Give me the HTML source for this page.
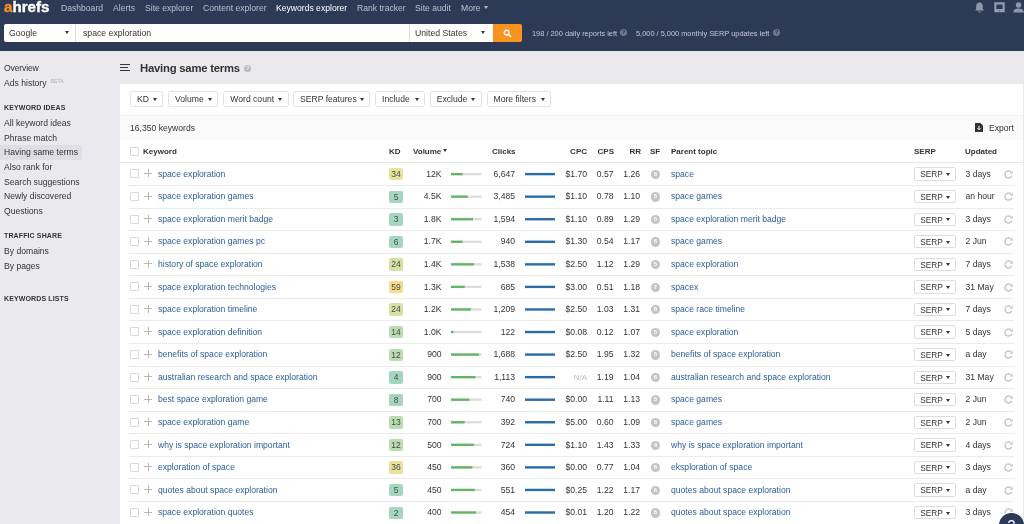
<!DOCTYPE html>
<html><head><meta charset="utf-8"><title>Keywords explorer</title>
<style>
*{box-sizing:border-box;margin:0;padding:0}
html{width:1024px;height:524px;overflow:hidden;background:#eaeaee}
body{width:1024px;height:524px;overflow:hidden;will-change:transform}
body{font-family:"Liberation Sans",sans-serif;font-size:8.6px;color:#333;position:relative}
.abs{position:absolute}
#top{position:absolute;left:0;top:0;width:1024px;height:51px;background:#2d3a55}
#logo{position:absolute;left:3.5px;top:-1.5px;font-weight:bold;font-size:14px;color:#fff;transform-origin:0 0;transform:scaleX(1.08);-webkit-text-stroke:.35px #fff}
#logo i{-webkit-text-stroke:.35px #f7931e}
#logo i{color:#f7931e;font-style:normal}
.nav{position:absolute;top:2.5px;font-size:8.6px;color:#b9c0cf;white-space:nowrap}
.nav.act{color:#fff}
#search{position:absolute;left:4px;top:23.7px;width:489px;height:18.8px;background:#fff;border-radius:2px 0 0 2px}
#search span{position:absolute;top:4.5px;font-size:8.7px;color:#333}
#search .sep{position:absolute;top:0;width:1px;height:100%;background:#ddd}
.caret{position:absolute;width:0;height:0;border-left:2.6px solid transparent;border-right:2.6px solid transparent;border-top:3.8px solid #333}
#go{position:absolute;left:492.5px;top:23.7px;width:29px;height:18.8px;background:#f7931e;border-radius:0 2px 2px 0}
.info{position:absolute;top:28.5px;font-size:7.4px;color:#c3c9d6;white-space:nowrap}
.q{position:absolute;width:7px;height:7px;border-radius:50%;background:#6d7890;color:#2d3a55;font-size:6px;font-weight:bold;text-align:center;line-height:7px}
#side a{position:absolute;left:4px;font-size:8.6px;color:#333;white-space:nowrap}
#side .h{position:absolute;left:4px;font-size:7px;font-weight:bold;color:#333;letter-spacing:.12px;white-space:nowrap}
#side .sel{position:absolute;left:0;top:145px;width:82px;height:15px;background:#dedee4;border-radius:0 2px 2px 0}
#title{position:absolute;left:140px;top:62px;font-size:11.3px;letter-spacing:-.22px;font-weight:bold;color:#333;white-space:nowrap}
#burger{position:absolute;left:120px;top:64.4px;width:10px;height:9px}
#burger i{position:absolute;left:0;height:1px;background:#3a3a3a}
#panel{position:absolute;left:120px;top:84.3px;width:902.5px;height:440px;background:#fff;overflow:hidden}
#sub{position:absolute;left:0;top:30.5px;width:904px;height:25px;background:#fafafa;border-top:1px solid #f1f1f1}
.fb{position:absolute;top:7.2px;height:15.6px;border:1px solid #e2e2e2;border-radius:2.5px;font-size:8.6px;color:#333;background:#fff;line-height:14.6px;padding-left:6px;white-space:nowrap}
.fb b{position:absolute;right:5.5px;top:5.3px;width:0;height:0;border-left:2.9px solid transparent;border-right:2.9px solid transparent;border-top:3.3px solid #333}
#cnt{position:absolute;left:10px;top:38.5px;font-size:8.6px;color:#333}
#exp{position:absolute;left:869px;top:38.5px;font-size:8.6px;color:#333}
#thead{position:absolute;left:0;top:55.7px;width:904px;height:22.8px;background:#fff;border-bottom:1px solid #e6e6e6}
#thead span{position:absolute;top:7px;font-size:8px;font-weight:bold;color:#333;white-space:nowrap}
.row{position:absolute;left:0;width:904px;height:22.56px}
.row:after{content:"";position:absolute;left:9px;right:10px;bottom:-1px;height:1px;background:#ebebeb}
.row>*{position:absolute;white-space:nowrap}
.cb{left:9.5px;top:7px;width:9px;height:9px;border:1px solid #d9d9d9;border-radius:1px;background:#fff}
.plus{left:24px;top:7px;width:8px;height:8px}
.plus:before{content:"";position:absolute;left:0;top:3.5px;width:8px;height:1px;background:#b8b8b8}
.plus:after{content:"";position:absolute;left:3.5px;top:0;width:1px;height:8px;background:#b8b8b8}
.kw,.pt{color:#2a5d9a;font-size:8.6px;top:6.3px}
.kw{left:38px}
.pt{left:551px}
.kd{left:269px;top:5.5px;width:14px;height:12.5px;font-size:8.5px;text-align:center;line-height:12.5px;color:#4a4a4a;border-radius:2px}
.vol{right:582.5px;top:6.3px;font-size:8.6px}
.vbar{left:331px;top:10.4px;width:30.5px;height:2.2px;background:#dcdcdc}
.vbar i{display:block;height:2.2px;background:#62b562}
.clicks{right:509px;top:6.3px;font-size:8.6px}
.cbar{left:405px;top:10.3px;width:30px;height:2.4px;background:#2b6ca3}
.cpc{right:437px;top:6.3px;font-size:8.6px}
.cpc.na{color:#bbb;font-size:8px;top:7px}
.cps{right:410.5px;top:6.3px;font-size:8.6px}
.rr{right:384px;top:6.3px;font-size:8.6px}
.sf{left:530.7px;top:7.2px;width:9.3px;height:9.3px;border-radius:50%;background:#c4c4c4;color:#fff;font-size:6px;font-weight:bold;text-align:center;line-height:9.3px}
.serp{left:794.3px;top:5px;width:41.4px;height:13.2px;border:1px solid #ddd;border-radius:2px;font-size:8.3px;line-height:12px;padding-left:5px;color:#333}
.serp b{position:absolute;right:5px;top:4.6px;width:0;height:0;border-left:2.3px solid transparent;border-right:2.3px solid transparent;border-top:3px solid #333}
.upd{left:845.5px;top:6.3px;font-size:8.6px}
.rf{left:883.4px;top:6.3px;width:11px;height:11px}
#help{position:absolute;left:999px;top:513px;width:24.6px;height:24.6px;border-radius:50%;background:#2d3a55;color:#fff;font-size:14px;text-align:center;line-height:25px;box-shadow:0 0 0 1px rgba(255,255,255,.8)}
</style></head><body>
<div id="top">
<div id="logo"><i>a</i>hrefs</div>
<span class="nav" style="left:61px">Dashboard</span>
<span class="nav" style="left:113px">Alerts</span>
<span class="nav" style="left:145px">Site explorer</span>
<span class="nav" style="left:203px">Content explorer</span>
<span class="nav act" style="left:276px">Keywords explorer</span>
<span class="nav" style="left:357px">Rank tracker</span>
<span class="nav" style="left:415px">Site audit</span>
<span class="nav" style="left:461px">More</span>
<i class="caret" style="left:484.3px;top:6.2px;border-top-color:#b9c0cf"></i>
<div id="search"><span style="left:5px">Google</span><i class="caret" style="left:60.6px;top:7.6px"></i><i class="sep" style="left:71px"></i><span style="left:79px">space exploration</span><i class="sep" style="left:405px"></i><span style="left:411px">United States</span><i class="caret" style="left:477px;top:7.6px"></i></div>
<div id="go"><svg style="position:absolute;left:10px;top:5px" width="9" height="9" viewBox="0 0 9 9"><circle cx="3.6" cy="3.6" r="2.4" fill="none" stroke="#fff" stroke-width="1.4"/><path d="M5.4 5.4L8 8" stroke="#fff" stroke-width="1.6"/></svg></div>
<span class="info" style="left:532px">198 / 200 daily reports left</span><span class="q" style="left:620px;top:29px">?</span>
<span class="info" style="left:636px">5,000 / 5,000 monthly SERP updates left</span><span class="q" style="left:773px;top:29px">?</span>
<svg class="abs" style="left:974px;top:1.6px" width="11" height="11" viewBox="0 0 11 11"><path d="M5.5 0.6C3.2 0.6 2.2 2.4 2.2 4.4V7L1 8.4h9L8.8 7V4.4C8.8 2.4 7.8 0.6 5.5 0.6zM4.3 9.2h2.4a1.2 1.2 0 0 1-2.4 0z" fill="#8e97ab"/></svg>
<svg class="abs" style="left:993.8px;top:1.6px" width="11" height="11" viewBox="0 0 11 11"><path d="M0.3 0.3h10.4v10h-10.4zM2.4 2.4v4.6h6.2V2.4zM4.6 8.6l.9.9.9-.9z" fill="#959db0" fill-rule="evenodd"/></svg>
<svg class="abs" style="left:1013px;top:1.6px" width="11" height="11" viewBox="0 0 11 11"><circle cx="5.5" cy="3" r="2.8" fill="#8e97ab"/><path d="M0.3 10.4c0-2.8 2-3.8 5.2-3.8s5.2 1 5.2 3.8z" fill="#8e97ab"/></svg>
</div>
<div id="side">
<div class="sel"></div>
<a style="top:63px;letter-spacing:-.15px">Overview</a>
<a style="top:77.5px">Ads history</a><a style="top:78.2px;left:50.5px;font-size:5.2px;color:#b0b0b5">BETA</a>
<span class="h" style="top:104px">KEYWORD IDEAS</span>
<a style="top:118px">All keyword ideas</a>
<a style="top:133px">Phrase match</a>
<a style="top:147px">Having same terms</a>
<a style="top:162px">Also rank for</a>
<a style="top:177px">Search suggestions</a>
<a style="top:191px">Newly discovered</a>
<a style="top:206px">Questions</a>
<span class="h" style="top:232px">TRAFFIC SHARE</span>
<a style="top:246px">By domains</a>
<a style="top:261px">By pages</a>
<span class="h" style="top:295px">KEYWORDS LISTS</span>
</div>
<div id="burger"><i style="top:0;width:10px"></i><i style="top:3px;width:8px"></i><i style="top:6px;width:10px"></i></div>
<div id="title">Having same terms</div><span class="q" style="left:244px;top:65px;background:#bbb;color:#e9e9ef">?</span>
<div id="panel">
<span class="fb" style="left:10px;width:33px">KD<b></b></span>
<span class="fb" style="left:48px;width:50px">Volume<b></b></span>
<span class="fb" style="left:103.3px;width:65.5px">Word count<b></b></span>
<span class="fb" style="left:173px;width:77px">SERP features<b></b></span>
<span class="fb" style="left:255px;width:50px">Include<b></b></span>
<span class="fb" style="left:309.7px;width:52.3px">Exclude<b></b></span>
<span class="fb" style="left:366.5px;width:64.5px">More filters<b></b></span>
<div id="sub"></div>
<span id="cnt">16,350 keywords</span>
<span id="exp">Export</span>
<svg class="abs" style="left:855px;top:39px" width="8" height="9" viewBox="0 0 8 9"><path d="M0 0h5.5L8 2.5V9H0z" fill="#333"/><path d="M4 3v3.5M2.5 5.2L4 6.8l1.5-1.6" stroke="#fff" stroke-width="1" fill="none"/></svg>
<div id="thead">
<span class="cb" style="top:7.5px;left:9.5px;position:absolute"></span>
<span style="left:23px">Keyword</span>
<span style="left:269px">KD</span>
<span style="left:293px">Volume</span><i class="caret" style="left:323px;top:9.5px"></i>
<span style="left:372px">Clicks</span>
<span style="right:437px">CPC</span>
<span style="right:410px">CPS</span>
<span style="right:383px">RR</span>
<span style="left:530px">SF</span>
<span style="left:551px">Parent topic</span>
<span style="left:794px">SERP</span>
<span style="left:845px">Updated</span>
</div>
<div id="rows" style="position:absolute;left:0;top:78.2px">
<div class="row" style="top:0.00px"><span class="cb"></span><span class="plus"></span><a class="kw">space exploration</a><span class="kd" style="background:#e8e39b">34</span><span class="vol">12K</span><span class="clicks">6,647</span><span class="cpc">$1.70</span><span class="cps">0.57</span><span class="rr">1.26</span><span class="sf">6</span><a class="pt">space</a><span class="serp">SERP<b></b></span><span class="upd">3 days</span><svg class="rf" viewBox="0 0 11 11"><path d="M8.79 6.7A3.5 3.5 0 1 1 7.97 3.03" fill="none" stroke="#c9c9c9" stroke-width="1.5"/><path d="M9.8 1.6V4.7H6.7z" fill="#c9c9c9"/></svg></div>
<div class="row" style="top:22.57px"><span class="cb"></span><span class="plus"></span><a class="kw">space exploration games</a><span class="kd" style="background:#a5d6c0">5</span><span class="vol">4.5K</span><span class="clicks">3,485</span><span class="cpc">$1.10</span><span class="cps">0.78</span><span class="rr">1.10</span><span class="sf">5</span><a class="pt">space games</a><span class="serp">SERP<b></b></span><span class="upd">an hour</span><svg class="rf" viewBox="0 0 11 11"><path d="M8.79 6.7A3.5 3.5 0 1 1 7.97 3.03" fill="none" stroke="#c9c9c9" stroke-width="1.5"/><path d="M9.8 1.6V4.7H6.7z" fill="#c9c9c9"/></svg></div>
<div class="row" style="top:45.14px"><span class="cb"></span><span class="plus"></span><a class="kw">space exploration merit badge</a><span class="kd" style="background:#a5d6c0">3</span><span class="vol">1.8K</span><span class="clicks">1,594</span><span class="cpc">$1.10</span><span class="cps">0.89</span><span class="rr">1.29</span><span class="sf">5</span><a class="pt">space exploration merit badge</a><span class="serp">SERP<b></b></span><span class="upd">3 days</span><svg class="rf" viewBox="0 0 11 11"><path d="M8.79 6.7A3.5 3.5 0 1 1 7.97 3.03" fill="none" stroke="#c9c9c9" stroke-width="1.5"/><path d="M9.8 1.6V4.7H6.7z" fill="#c9c9c9"/></svg></div>
<div class="row" style="top:67.71px"><span class="cb"></span><span class="plus"></span><a class="kw">space exploration games pc</a><span class="kd" style="background:#a5d6c0">6</span><span class="vol">1.7K</span><span class="clicks">940</span><span class="cpc">$1.30</span><span class="cps">0.54</span><span class="rr">1.17</span><span class="sf">6</span><a class="pt">space games</a><span class="serp">SERP<b></b></span><span class="upd">2 Jun</span><svg class="rf" viewBox="0 0 11 11"><path d="M8.79 6.7A3.5 3.5 0 1 1 7.97 3.03" fill="none" stroke="#c9c9c9" stroke-width="1.5"/><path d="M9.8 1.6V4.7H6.7z" fill="#c9c9c9"/></svg></div>
<div class="row" style="top:90.28px"><span class="cb"></span><span class="plus"></span><a class="kw">history of space exploration</a><span class="kd" style="background:#d3e3a5">24</span><span class="vol">1.4K</span><span class="clicks">1,538</span><span class="cpc">$2.50</span><span class="cps">1.12</span><span class="rr">1.29</span><span class="sf">5</span><a class="pt">space exploration</a><span class="serp">SERP<b></b></span><span class="upd">7 days</span><svg class="rf" viewBox="0 0 11 11"><path d="M8.79 6.7A3.5 3.5 0 1 1 7.97 3.03" fill="none" stroke="#c9c9c9" stroke-width="1.5"/><path d="M9.8 1.6V4.7H6.7z" fill="#c9c9c9"/></svg></div>
<div class="row" style="top:112.85px"><span class="cb"></span><span class="plus"></span><a class="kw">space exploration technologies</a><span class="kd" style="background:#f8dc8e">59</span><span class="vol">1.3K</span><span class="clicks">685</span><span class="cpc">$3.00</span><span class="cps">0.51</span><span class="rr">1.18</span><span class="sf">7</span><a class="pt">spacex</a><span class="serp">SERP<b></b></span><span class="upd">31 May</span><svg class="rf" viewBox="0 0 11 11"><path d="M8.79 6.7A3.5 3.5 0 1 1 7.97 3.03" fill="none" stroke="#c9c9c9" stroke-width="1.5"/><path d="M9.8 1.6V4.7H6.7z" fill="#c9c9c9"/></svg></div>
<div class="row" style="top:135.42px"><span class="cb"></span><span class="plus"></span><a class="kw">space exploration timeline</a><span class="kd" style="background:#d3e3a5">24</span><span class="vol">1.2K</span><span class="clicks">1,209</span><span class="cpc">$2.50</span><span class="cps">1.03</span><span class="rr">1.31</span><span class="sf">6</span><a class="pt">space race timeline</a><span class="serp">SERP<b></b></span><span class="upd">7 days</span><svg class="rf" viewBox="0 0 11 11"><path d="M8.79 6.7A3.5 3.5 0 1 1 7.97 3.03" fill="none" stroke="#c9c9c9" stroke-width="1.5"/><path d="M9.8 1.6V4.7H6.7z" fill="#c9c9c9"/></svg></div>
<div class="row" style="top:157.99px"><span class="cb"></span><span class="plus"></span><a class="kw">space exploration definition</a><span class="kd" style="background:#b9dcb0">14</span><span class="vol">1.0K</span><span class="clicks">122</span><span class="cpc">$0.08</span><span class="cps">0.12</span><span class="rr">1.07</span><span class="sf">5</span><a class="pt">space exploration</a><span class="serp">SERP<b></b></span><span class="upd">5 days</span><svg class="rf" viewBox="0 0 11 11"><path d="M8.79 6.7A3.5 3.5 0 1 1 7.97 3.03" fill="none" stroke="#c9c9c9" stroke-width="1.5"/><path d="M9.8 1.6V4.7H6.7z" fill="#c9c9c9"/></svg></div>
<div class="row" style="top:180.56px"><span class="cb"></span><span class="plus"></span><a class="kw">benefits of space exploration</a><span class="kd" style="background:#b9dcb0">12</span><span class="vol">900</span><span class="clicks">1,688</span><span class="cpc">$2.50</span><span class="cps">1.95</span><span class="rr">1.32</span><span class="sf">5</span><a class="pt">benefits of space exploration</a><span class="serp">SERP<b></b></span><span class="upd">a day</span><svg class="rf" viewBox="0 0 11 11"><path d="M8.79 6.7A3.5 3.5 0 1 1 7.97 3.03" fill="none" stroke="#c9c9c9" stroke-width="1.5"/><path d="M9.8 1.6V4.7H6.7z" fill="#c9c9c9"/></svg></div>
<div class="row" style="top:203.13px"><span class="cb"></span><span class="plus"></span><a class="kw">australian research and space exploration</a><span class="kd" style="background:#a5d6c0">4</span><span class="vol">900</span><span class="clicks">1,113</span><span class="cpc na">N/A</span><span class="cps">1.19</span><span class="rr">1.04</span><span class="sf">6</span><a class="pt">australian research and space exploration</a><span class="serp">SERP<b></b></span><span class="upd">31 May</span><svg class="rf" viewBox="0 0 11 11"><path d="M8.79 6.7A3.5 3.5 0 1 1 7.97 3.03" fill="none" stroke="#c9c9c9" stroke-width="1.5"/><path d="M9.8 1.6V4.7H6.7z" fill="#c9c9c9"/></svg></div>
<div class="row" style="top:225.70px"><span class="cb"></span><span class="plus"></span><a class="kw">best space exploration game</a><span class="kd" style="background:#a5d6c0">8</span><span class="vol">700</span><span class="clicks">740</span><span class="cpc">$0.00</span><span class="cps">1.11</span><span class="rr">1.13</span><span class="sf">5</span><a class="pt">space games</a><span class="serp">SERP<b></b></span><span class="upd">2 Jun</span><svg class="rf" viewBox="0 0 11 11"><path d="M8.79 6.7A3.5 3.5 0 1 1 7.97 3.03" fill="none" stroke="#c9c9c9" stroke-width="1.5"/><path d="M9.8 1.6V4.7H6.7z" fill="#c9c9c9"/></svg></div>
<div class="row" style="top:248.27px"><span class="cb"></span><span class="plus"></span><a class="kw">space exploration game</a><span class="kd" style="background:#b9dcb0">13</span><span class="vol">700</span><span class="clicks">392</span><span class="cpc">$5.00</span><span class="cps">0.60</span><span class="rr">1.09</span><span class="sf">6</span><a class="pt">space games</a><span class="serp">SERP<b></b></span><span class="upd">2 Jun</span><svg class="rf" viewBox="0 0 11 11"><path d="M8.79 6.7A3.5 3.5 0 1 1 7.97 3.03" fill="none" stroke="#c9c9c9" stroke-width="1.5"/><path d="M9.8 1.6V4.7H6.7z" fill="#c9c9c9"/></svg></div>
<div class="row" style="top:270.84px"><span class="cb"></span><span class="plus"></span><a class="kw">why is space exploration important</a><span class="kd" style="background:#b9dcb0">12</span><span class="vol">500</span><span class="clicks">724</span><span class="cpc">$1.10</span><span class="cps">1.43</span><span class="rr">1.33</span><span class="sf">4</span><a class="pt">why is space exploration important</a><span class="serp">SERP<b></b></span><span class="upd">4 days</span><svg class="rf" viewBox="0 0 11 11"><path d="M8.79 6.7A3.5 3.5 0 1 1 7.97 3.03" fill="none" stroke="#c9c9c9" stroke-width="1.5"/><path d="M9.8 1.6V4.7H6.7z" fill="#c9c9c9"/></svg></div>
<div class="row" style="top:293.41px"><span class="cb"></span><span class="plus"></span><a class="kw">exploration of space</a><span class="kd" style="background:#e8e39b">36</span><span class="vol">450</span><span class="clicks">360</span><span class="cpc">$0.00</span><span class="cps">0.77</span><span class="rr">1.04</span><span class="sf">6</span><a class="pt">eksploration of space</a><span class="serp">SERP<b></b></span><span class="upd">3 days</span><svg class="rf" viewBox="0 0 11 11"><path d="M8.79 6.7A3.5 3.5 0 1 1 7.97 3.03" fill="none" stroke="#c9c9c9" stroke-width="1.5"/><path d="M9.8 1.6V4.7H6.7z" fill="#c9c9c9"/></svg></div>
<div class="row" style="top:315.98px"><span class="cb"></span><span class="plus"></span><a class="kw">quotes about space exploration</a><span class="kd" style="background:#a5d6c0">5</span><span class="vol">450</span><span class="clicks">551</span><span class="cpc">$0.25</span><span class="cps">1.22</span><span class="rr">1.17</span><span class="sf">6</span><a class="pt">quotes about space exploration</a><span class="serp">SERP<b></b></span><span class="upd">a day</span><svg class="rf" viewBox="0 0 11 11"><path d="M8.79 6.7A3.5 3.5 0 1 1 7.97 3.03" fill="none" stroke="#c9c9c9" stroke-width="1.5"/><path d="M9.8 1.6V4.7H6.7z" fill="#c9c9c9"/></svg></div>
<div class="row" style="top:338.55px"><span class="cb"></span><span class="plus"></span><a class="kw">space exploration quotes</a><span class="kd" style="background:#a5d6c0">2</span><span class="vol">400</span><span class="clicks">454</span><span class="cpc">$0.01</span><span class="cps">1.20</span><span class="rr">1.22</span><span class="sf">6</span><a class="pt">quotes about space exploration</a><span class="serp">SERP<b></b></span><span class="upd">3 days</span><svg class="rf" viewBox="0 0 11 11"><path d="M8.79 6.7A3.5 3.5 0 1 1 7.97 3.03" fill="none" stroke="#c9c9c9" stroke-width="1.5"/><path d="M9.8 1.6V4.7H6.7z" fill="#c9c9c9"/></svg></div>
</div>
<svg style="position:absolute;left:0;top:0" width="904" height="440" viewBox="0 0 904 440"><rect x="331" y="88.95" width="30.5" height="2.3" fill="#dcdcdc"/><rect x="331" y="88.95" width="11.6" height="2.3" fill="#62b562"/><rect x="405" y="88.90" width="30" height="2.4" fill="#2b6ca3"/><rect x="331" y="111.51" width="30.5" height="2.3" fill="#dcdcdc"/><rect x="331" y="111.51" width="16.8" height="2.3" fill="#62b562"/><rect x="405" y="111.46" width="30" height="2.4" fill="#2b6ca3"/><rect x="331" y="134.07" width="30.5" height="2.3" fill="#dcdcdc"/><rect x="331" y="134.07" width="22.0" height="2.3" fill="#62b562"/><rect x="405" y="134.02" width="30" height="2.4" fill="#2b6ca3"/><rect x="331" y="156.63" width="30.5" height="2.3" fill="#dcdcdc"/><rect x="331" y="156.63" width="11.6" height="2.3" fill="#62b562"/><rect x="405" y="156.58" width="30" height="2.4" fill="#2b6ca3"/><rect x="331" y="179.19" width="30.5" height="2.3" fill="#dcdcdc"/><rect x="331" y="179.19" width="22.9" height="2.3" fill="#62b562"/><rect x="405" y="179.14" width="30" height="2.4" fill="#2b6ca3"/><rect x="331" y="201.75" width="30.5" height="2.3" fill="#dcdcdc"/><rect x="331" y="201.75" width="13.7" height="2.3" fill="#62b562"/><rect x="405" y="201.70" width="30" height="2.4" fill="#2b6ca3"/><rect x="331" y="224.31" width="30.5" height="2.3" fill="#dcdcdc"/><rect x="331" y="224.31" width="19.8" height="2.3" fill="#62b562"/><rect x="405" y="224.26" width="30" height="2.4" fill="#2b6ca3"/><rect x="331" y="246.87" width="30.5" height="2.3" fill="#dcdcdc"/><rect x="331" y="246.87" width="2.4" height="2.3" fill="#62b562"/><rect x="405" y="246.82" width="30" height="2.4" fill="#2b6ca3"/><rect x="331" y="269.43" width="30.5" height="2.3" fill="#dcdcdc"/><rect x="331" y="269.43" width="28.1" height="2.3" fill="#62b562"/><rect x="405" y="269.38" width="30" height="2.4" fill="#2b6ca3"/><rect x="331" y="291.99" width="30.5" height="2.3" fill="#dcdcdc"/><rect x="331" y="291.99" width="24.4" height="2.3" fill="#62b562"/><rect x="405" y="291.94" width="30" height="2.4" fill="#2b6ca3"/><rect x="331" y="314.55" width="30.5" height="2.3" fill="#dcdcdc"/><rect x="331" y="314.55" width="18.3" height="2.3" fill="#62b562"/><rect x="405" y="314.50" width="30" height="2.4" fill="#2b6ca3"/><rect x="331" y="337.11" width="30.5" height="2.3" fill="#dcdcdc"/><rect x="331" y="337.11" width="13.7" height="2.3" fill="#62b562"/><rect x="405" y="337.06" width="30" height="2.4" fill="#2b6ca3"/><rect x="331" y="359.67" width="30.5" height="2.3" fill="#dcdcdc"/><rect x="331" y="359.67" width="22.9" height="2.3" fill="#62b562"/><rect x="405" y="359.62" width="30" height="2.4" fill="#2b6ca3"/><rect x="331" y="382.23" width="30.5" height="2.3" fill="#dcdcdc"/><rect x="331" y="382.23" width="21.4" height="2.3" fill="#62b562"/><rect x="405" y="382.18" width="30" height="2.4" fill="#2b6ca3"/><rect x="331" y="404.79" width="30.5" height="2.3" fill="#dcdcdc"/><rect x="331" y="404.79" width="23.8" height="2.3" fill="#62b562"/><rect x="405" y="404.74" width="30" height="2.4" fill="#2b6ca3"/><rect x="331" y="427.35" width="30.5" height="2.3" fill="#dcdcdc"/><rect x="331" y="427.35" width="25.0" height="2.3" fill="#62b562"/><rect x="405" y="427.30" width="30" height="2.4" fill="#2b6ca3"/></svg><div>
</div>
</div>
<div id="help">?</div>
</body></html>
